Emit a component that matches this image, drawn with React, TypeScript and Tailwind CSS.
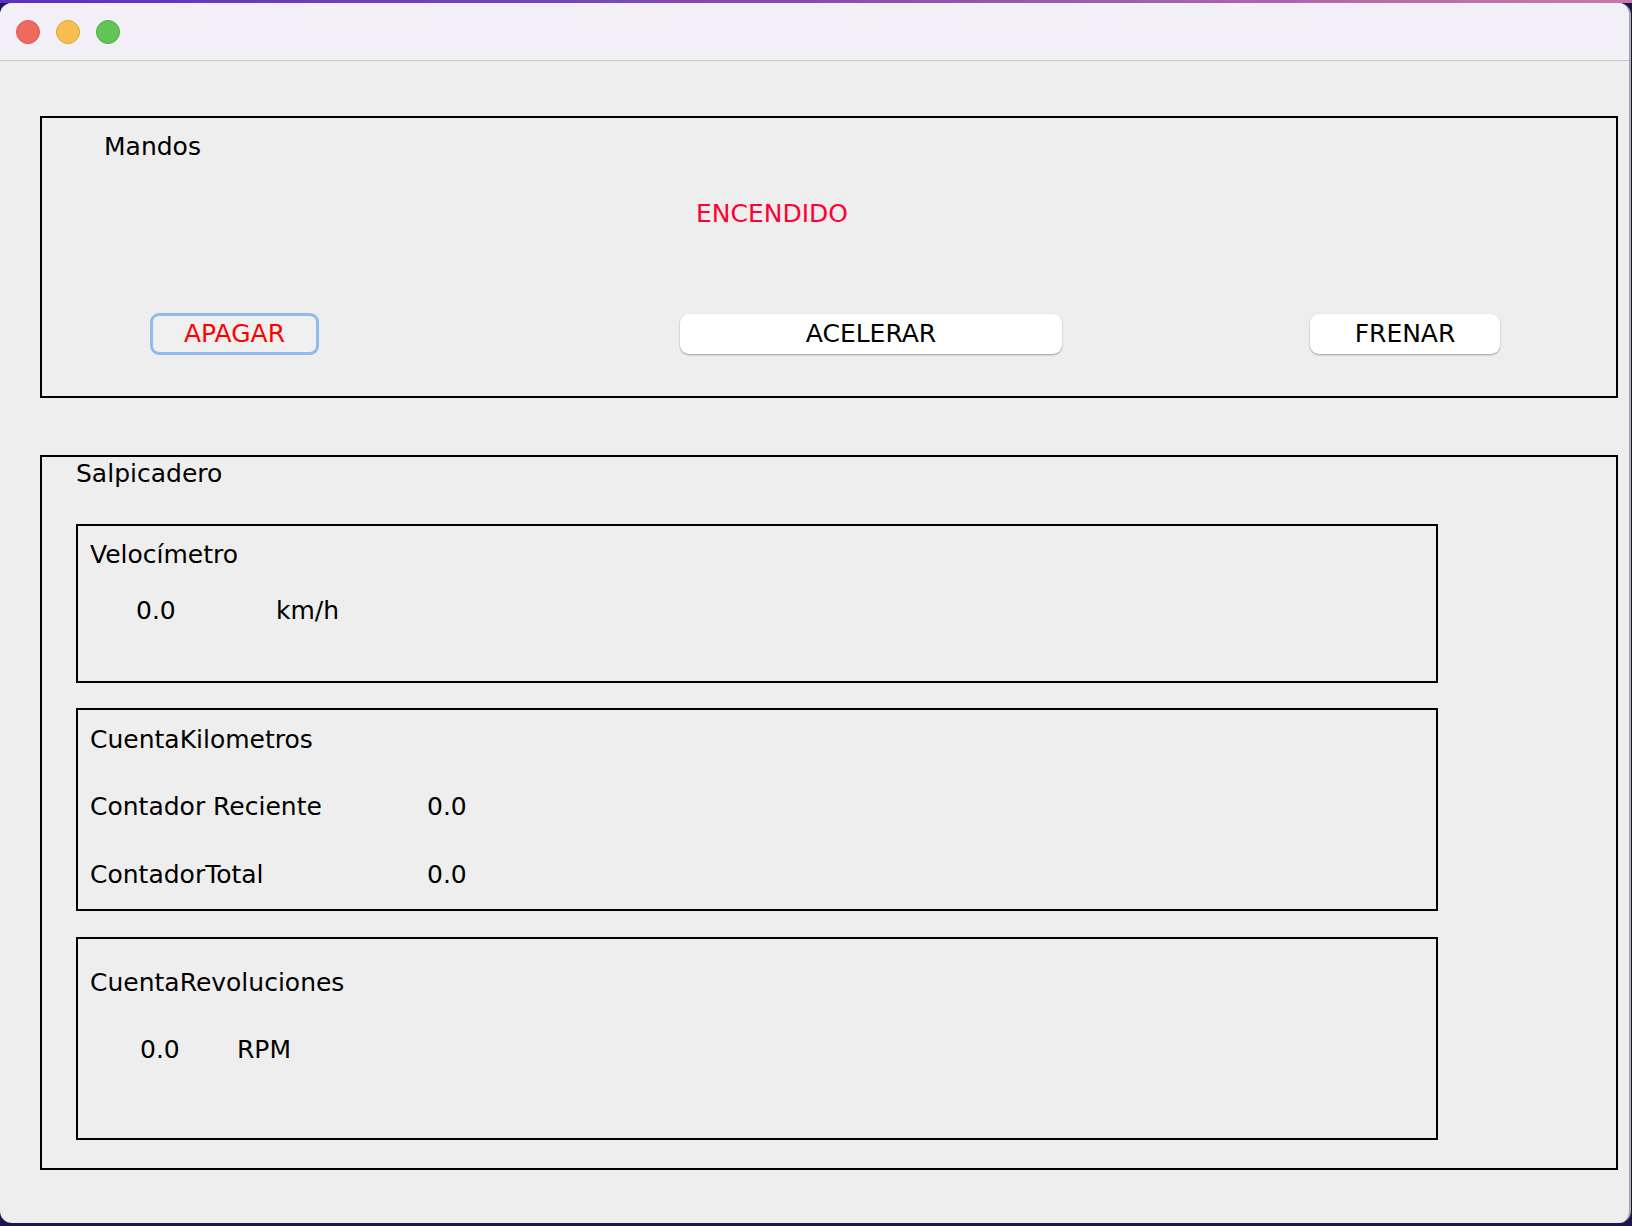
const font = { fontFamily: '"DejaVu Sans", "Liberation Sans", sans-serif' }

function Lights() {
  return (
    <div className="flex items-center gap-[16px] pl-[16px]">
      <span className="h-[24px] w-[24px] rounded-full bg-[#ee6a5f] border border-[#d65a50]" />
      <span className="h-[24px] w-[24px] rounded-full bg-[#f5c04f] border border-[#dca63c]" />
      <span className="h-[24px] w-[24px] rounded-full bg-[#61c554] border border-[#4fae43]" />
    </div>
  )
}

export default function App() {
  return (
    <div className="w-[1632px] h-[1226px] bg-[#1d1450] flex flex-col overflow-hidden" style={font}>
      <div className="h-[3px] shrink-0 bg-gradient-to-r from-[#5a2fc4] via-[#8a4bb0] to-[#c879a6]" />
      <div className="w-[1631px] h-[1220px] rounded-[12px] overflow-hidden bg-[#eeeeee] border-r-2 border-[#a9a9a9] flex flex-col text-[25px] leading-[28px] text-black">
        {/* title bar */}
        <div className="h-[58px] shrink-0 bg-[#f2eff6] border-b border-[#c9c9c9] flex items-center">
          <Lights />
        </div>

        {/* Mandos */}
        <div className="mt-[55px] ml-[40px] w-[1578px] h-[282px] border-2 border-black flex flex-col">
          <div className="pt-[15px] pl-[62px]">Mandos</div>
          <div className="mt-[39px] pl-[654px] text-[#ff0033]">ENCENDIDO</div>
          <div className="mt-[85px] flex items-center">
            <button className="ml-[108px] w-[169px] h-[42px] rounded-[9px] border-[3px] border-[#8fbbf0] bg-[#f0f0f0] text-[#ff0000]">
              APAGAR
            </button>
            <button className="ml-[361px] w-[382px] h-[40px] rounded-[9px] bg-white shadow-[0_1px_2px_rgba(0,0,0,0.35)]">
              ACELERAR
            </button>
            <button className="ml-[248px] w-[190px] h-[40px] rounded-[9px] bg-white shadow-[0_1px_2px_rgba(0,0,0,0.35)]">
              FRENAR
            </button>
          </div>
        </div>

        {/* Salpicadero */}
        <div className="mt-[57px] ml-[40px] w-[1578px] h-[715px] border-2 border-black flex flex-col">
          <div className="pt-[3px] pl-[34px]">Salpicadero</div>

          <div className="mt-[36px] ml-[34px] w-[1362px] h-[159px] border-2 border-black flex flex-col">
            <div className="pt-[15px] pl-[12px]">Velocímetro</div>
            <div className="mt-[28px] flex">
              <span className="ml-[58px] w-[140px]">0.0</span>
              <span>km/h</span>
            </div>
          </div>

          <div className="mt-[25px] ml-[34px] w-[1362px] h-[203px] border-2 border-black flex flex-col">
            <div className="pt-[16px] pl-[12px]">CuentaKilometros</div>
            <div className="mt-[39px] pl-[12px] flex">
              <span className="w-[337px]">Contador Reciente</span>
              <span>0.0</span>
            </div>
            <div className="mt-[40px] pl-[12px] flex">
              <span className="w-[337px]">ContadorTotal</span>
              <span>0.0</span>
            </div>
          </div>

          <div className="mt-[26px] ml-[34px] w-[1362px] h-[203px] border-2 border-black flex flex-col">
            <div className="pt-[30px] pl-[12px]">CuentaRevoluciones</div>
            <div className="mt-[39px] flex">
              <span className="ml-[62px] w-[97px]">0.0</span>
              <span>RPM</span>
            </div>
          </div>
        </div>
      </div>
    </div>
  )
}
